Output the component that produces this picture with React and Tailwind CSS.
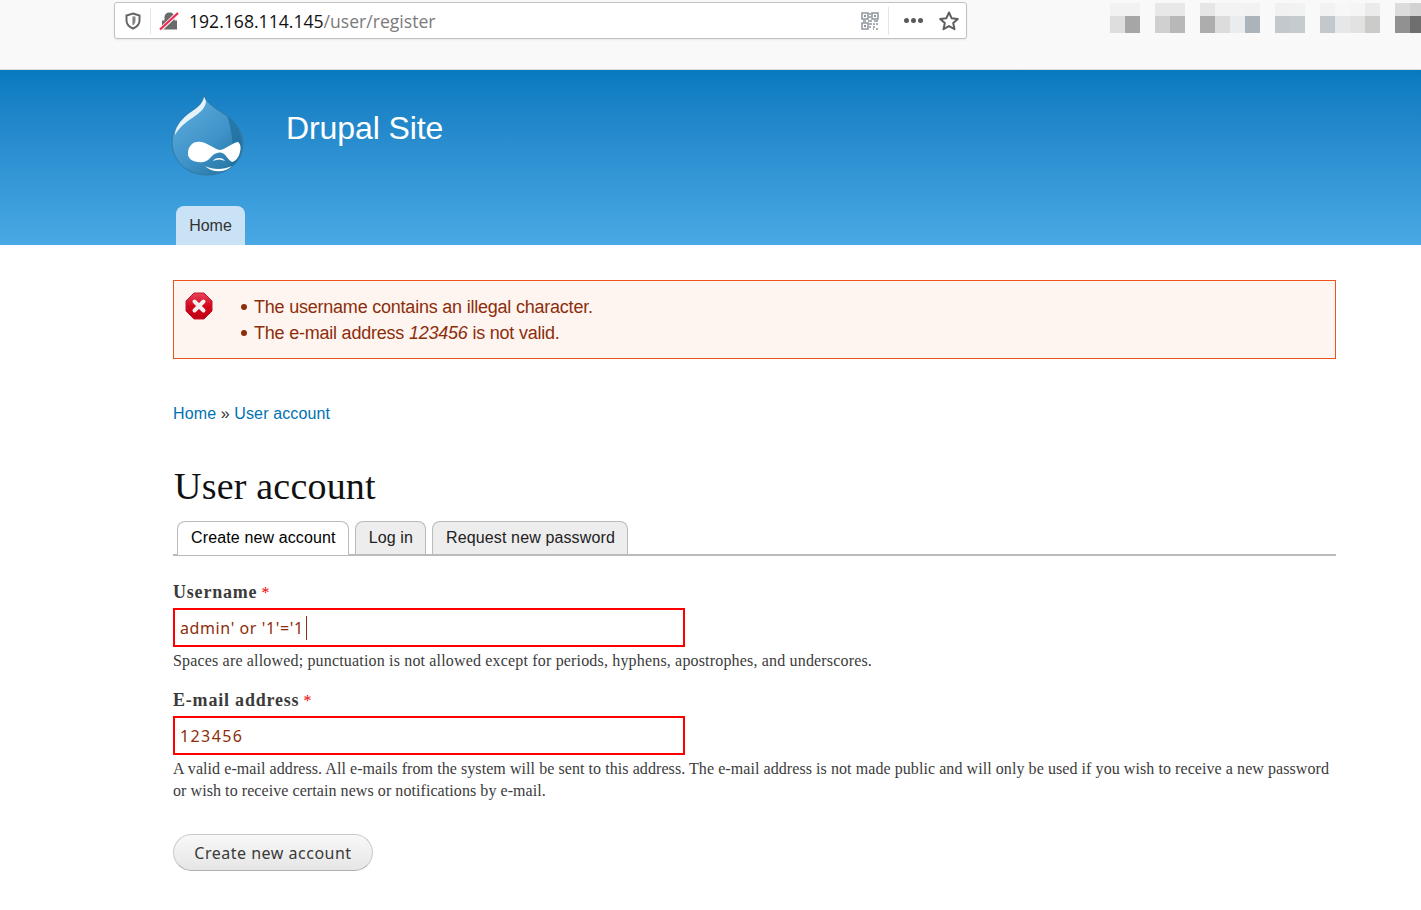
const tiles = [
  { top: ['#f2f2f2', '#f2f2f2'], bottom: ['#dedede', '#a6a6a6'] },
  { top: ['#e8e8e8', '#e8e8e8'], bottom: ['#d0d0d1', '#b8b8b9'] },
  { top: ['#e6e6e7', '#f3f3f3', '#f3f3f4', '#f2f2f3'], bottom: ['#adadad', '#dcdcdd', '#ebecee', '#abb3bb'] },
  { top: ['#f1f1f2', '#f1f2f3'], bottom: ['#c3c8cd', '#c6cbcf'] },
  { top: ['#f2f2f2', '#f7f7f7', '#f5f5f5', '#ebebeb'], bottom: ['#c3c8cd', '#e6e7e9', '#e2e2e3', '#cbcbca'] },
  { top: ['#dcdcdc', '#d2d2d2'], bottom: ['#919191', '#6f6f6f'] },
];

function BrowserBar() {
  return (
    <div className="h-[70px] bg-[#f9f9f9] border-b border-[#dcdcdc] flex items-start pl-[114px] pt-[2px]">
      <div className="w-[853px] h-[37px] shrink-0 bg-white border border-[#c2c2c2] rounded-[3px] shadow-[0_1px_2px_rgba(0,0,0,0.08)] flex items-center font-['Open_Sans',sans-serif]">
        <svg width="16" height="18" viewBox="0 0 16 18" className="ml-[10px]">
          <path d="M8 1.500 L14.500 3.500 V8.500 C14.500 12.500 11.500 15 8 16.500 C4.500 15 1.500 12.500 1.500 8.500 V3.500 Z" fill="none" stroke="#666" strokeWidth="2" />
          <path d="M8 4.500 H10.500 V8.500 C10.500 10.500 9.500 12 8 13 Z" fill="#888" />
          <path d="M8 4.500 V13" stroke="#777" strokeWidth="1" />
        </svg>
        <div className="w-px h-[26px] bg-[#e4e4e4] ml-[9px]" />
        <svg width="20" height="20" viewBox="0 0 20 20" className="ml-[8px]">
          <path d="M3 18.500 V9.500 H5.500 V6.500 C5.500 3.500 7.500 1.500 10.500 1.500 C13.500 1.500 15.500 3.500 15.500 6.500 V9.500 H18 V18.500 Z" fill="#6a6a6a" />
          <path d="M1 19 L19 2" stroke="#f9f9f9" strokeWidth="4" />
          <path d="M1 18.500 L19 2" stroke="#f0284f" strokeWidth="2.200" />
        </svg>
        <div className="ml-[10px] pt-[2px] text-[17.600px] leading-none text-[#111] whitespace-nowrap">
          192.168.114.145<span className="text-[#7b7b7b]">/user/register</span>
        </div>
        <div className="flex-1" />
        <svg width="18" height="18" viewBox="0 0 18 18" fill="none" stroke="#8d959c">
          <rect x="1" y="1" width="6" height="6" strokeWidth="1.500" />
          <rect x="11" y="1" width="6" height="6" strokeWidth="1.500" />
          <rect x="1" y="11" width="6" height="6" strokeWidth="1.500" />
          <path d="M3 4 h2 M13 4 h2 M3 14 h2" strokeWidth="2" />
          <path d="M8 2 h2 M8 5 h2 M2 9 h3 M7 9 h4 M13 9 h4 M8 12 h3 M12 12 h2 M8 15 h2 M12 15 h2 M15 12 h2 M15 17 h2 M12 17 h1" strokeWidth="1.500" />
        </svg>
        <div className="w-px h-[28px] bg-[#e4e4e4] ml-[9px]" />
        <div className="flex gap-[2px] ml-[15px]">
          <span className="w-[5px] h-[5px] rounded-full bg-[#5a5a5a]" />
          <span className="w-[5px] h-[5px] rounded-full bg-[#5a5a5a]" />
          <span className="w-[5px] h-[5px] rounded-full bg-[#5a5a5a]" />
        </div>
        <svg width="22" height="22" viewBox="0 0 22 22" className="ml-[15px] mr-[6px]">
          <path d="M11 2.500 L13.600 8.200 L19.800 8.900 L15.200 13.100 L16.500 19.200 L11 16.100 L5.500 19.200 L6.800 13.100 L2.200 8.900 L8.400 8.200 Z" fill="none" stroke="#5f5f5f" strokeWidth="2" strokeLinejoin="round" />
        </svg>
      </div>
      <div className="flex gap-[15px] ml-[143px] mt-[1px] shrink-0">
        {tiles.map((t, i) => (
          <div key={i} className="flex flex-col">
            <div className="flex h-[13px]">
              {t.top.map((c, j) => <div key={j} className="w-[15px]" style={{ background: c }} />)}
            </div>
            <div className="flex h-[17px]">
              {t.bottom.map((c, j) => <div key={j} className="w-[15px]" style={{ background: c }} />)}
            </div>
          </div>
        ))}
      </div>
    </div>
  );
}

function DrupalLogo() {
  return (
    <svg width="74" height="82" viewBox="0 0 74 82">
      <defs>
        <linearGradient id="drop" x1="0.2" y1="0.1" x2="0.8" y2="0.9">
          <stop offset="0" stopColor="#5aa8da" />
          <stop offset="0.6" stopColor="#3f93c8" />
          <stop offset="1" stopColor="#2a7aa8" />
        </linearGradient>
      </defs>
      <path d="M33 1 C35 9 44 14 53 20 C65 28 72 38 72 50 C72 68 56 81 36 81 C16 81 1 67 1 48 C1 34 10 25 20 18 C27 13 31 9 33 1 Z" fill="url(#drop)" stroke="#2f7aa3" strokeWidth="1" />
      <path d="M33 3 C32 11 24 15 16 21 C9 27 4 34 4 41 C9 32 17 27 24 22 C30 18 35 13 35 7 Z" fill="#e4f2fa" />
      <path d="M56 22 C66 29 71 39 71 50 C71 60 66 68 58 74 C64 62 62 38 56 22 Z" fill="#1f6e9f" opacity="0.75" />
      <path d="M17 58 C18 50 24 47 30 48 C37 49 43 55 49 56 C55 55 61 49 67 48 C70 50 70 55 69 58 C68 63 65 67 61 68 C57 66 55 60 51 59 C48 58 45 59 42 61 C39 64 36 68 32 68 C24 69 16 66 17 58 Z" fill="#fff" />
      <path d="M42 67 C44 63 52 63 54 67 C50 65 46 65 42 67 Z M34 72 C42 76 52 76 61 72 C54 79 41 79 34 72 Z" fill="#fff" />
    </svg>
  );
}

function Header() {
  return (
    <div className="h-[175px] bg-gradient-to-b from-[#0779bf] to-[#48a9e4] pl-[172px] font-['Liberation_Sans',sans-serif]">
      <div className="h-[136px] flex items-start">
        <div className="mt-[24px] -ml-px"><DrupalLogo /></div>
        <div className="ml-[41px] mt-[38px] text-[32px] leading-[40px] text-white tracking-[-0.100px]">Drupal Site</div>
      </div>
      <a className="block ml-[4px] w-[69px] h-[39px] bg-[#c9e2f5] rounded-t-[8px] text-[16px] leading-[39px] text-center text-[#333]">Home</a>
    </div>
  );
}

function ErrorIcon() {
  return (
    <svg width="28" height="28" viewBox="0 0 28 28">
      <defs>
        <linearGradient id="err" x1="0" y1="0" x2="0" y2="1">
          <stop offset="0" stopColor="#e8465a" />
          <stop offset="0.5" stopColor="#d4051d" />
          <stop offset="1" stopColor="#c00015" />
        </linearGradient>
      </defs>
      <path d="M9 1 H19 L27 9 V19 L19 27 H9 L1 19 V9 Z" fill="url(#err)" stroke="#c0182c" strokeWidth="1" strokeLinejoin="round" />
      <path d="M9.500 9.500 L18.500 18.500 M18.500 9.500 L9.500 18.500" stroke="#f4eeee" strokeWidth="4" strokeLinecap="round" />
    </svg>
  );
}

function Tab({ active, children }) {
  return active ? (
    <div className="h-[34px] -mb-px pl-[13px] pr-[12px] bg-white border border-b-0 border-[#bbb] rounded-t-[8px] text-[16px] leading-[31px] tracking-[0.130px] text-black">{children}</div>
  ) : (
    <div className="h-[33px] pl-[13px] pr-[12px] bg-[#ededed] border border-b-0 border-[#bbb] rounded-t-[8px] text-[16px] leading-[31px] tracking-[0.130px] text-[#222]">{children}</div>
  );
}

function Field({ label, value, letter, caret }) {
  return (
    <>
      <label className="block text-[18px] leading-[20px] font-bold text-[#3b3b3b] font-['Liberation_Serif',serif] tracking-[0.800px]">
        {label}<span className="ml-[4px] text-[16px] tracking-normal text-[#e00] font-normal">*</span>
      </label>
      <div className="mt-[5px] w-[512px] h-[39px] border-2 border-[#f00] bg-white px-[5px] flex items-center text-[16px] text-[#8c2e0b] font-['Noto_Sans',sans-serif]">
        <span className={letter}>{value}</span>
        {caret && <span className="w-px h-[24px] bg-[#8c2e0b] ml-[2px]" />}
      </div>
    </>
  );
}

function Bullet({ children }) {
  return (
    <li className="flex items-center">
      <span className="w-[6px] h-[6px] rounded-full bg-[#8c2e0b] mr-[7px]" />
      <span>{children}</span>
    </li>
  );
}

export default function App() {
  return (
    <div className="min-h-[910px] bg-white overflow-hidden">
      <BrowserBar />
      <Header />
      <main className="ml-[173px] w-[1163px] pt-[35px] font-['Liberation_Sans',sans-serif]">
        <div className="h-[79px] border border-[#ed541d] bg-[#fef5f1] flex text-[#8c2e0b] text-[18px] leading-[26px] tracking-[-0.220px]">
          <div className="ml-[11px] mt-[11px]"><ErrorIcon /></div>
          <ul className="ml-[28px] mt-[13px]">
            <Bullet>The username contains an illegal character.</Bullet>
            <Bullet>The e-mail address <em>123456</em> is not valid.</Bullet>
          </ul>
        </div>

        <div className="mt-[45px] text-[16px] leading-[20px] tracking-[0.120px] text-[#333]">
          <a className="text-[#0071b3]">Home</a> » <a className="text-[#0071b3]">User account</a>
        </div>

        <h1 className="mt-[39px] ml-px text-[38px] leading-[46px] tracking-[0.200px] text-[#111] font-['Liberation_Serif',serif]">User account</h1>

        <div className="mt-[14px] flex gap-[6px] pl-[4px] border-b-2 border-[#bbb] h-[33px] items-end">
          <Tab active>Create new account</Tab>
          <Tab>Log in</Tab>
          <Tab>Request new password</Tab>
        </div>

        <div className="mt-[26px]">
          <Field label="Username" value="admin' or '1'='1" letter="tracking-[0.600px]" caret />
          <p className="mt-[3px] text-[16px] leading-[22px] tracking-[0.170px] text-[#3b3b3b] font-['Liberation_Serif',serif]">Spaces are allowed; punctuation is not allowed except for periods, hyphens, apostrophes, and underscores.</p>
        </div>

        <div className="mt-[18px]">
          <Field label="E-mail address" value="123456" letter="tracking-[1.400px]" />
          <p className="mt-[3px] text-[16px] leading-[22px] tracking-[0.070px] text-[#3b3b3b] font-['Liberation_Serif',serif]">A valid e-mail address. All e-mails from the system will be sent to this address. The e-mail address is not made public and will only be used if you wish to receive a new password or wish to receive certain news or notifications by e-mail.</p>
        </div>

        <button className="mt-[32px] w-[200px] h-[37px] rounded-[19px] border border-[#c8c8c8] border-b-[#b0b0b0] bg-gradient-to-b from-[#f8f8f8] to-[#e6e6e6] text-[16px] tracking-[0.500px] text-[#3a3a3a] font-['Noto_Sans',sans-serif]">Create new account</button>
      </main>
    </div>
  );
}
